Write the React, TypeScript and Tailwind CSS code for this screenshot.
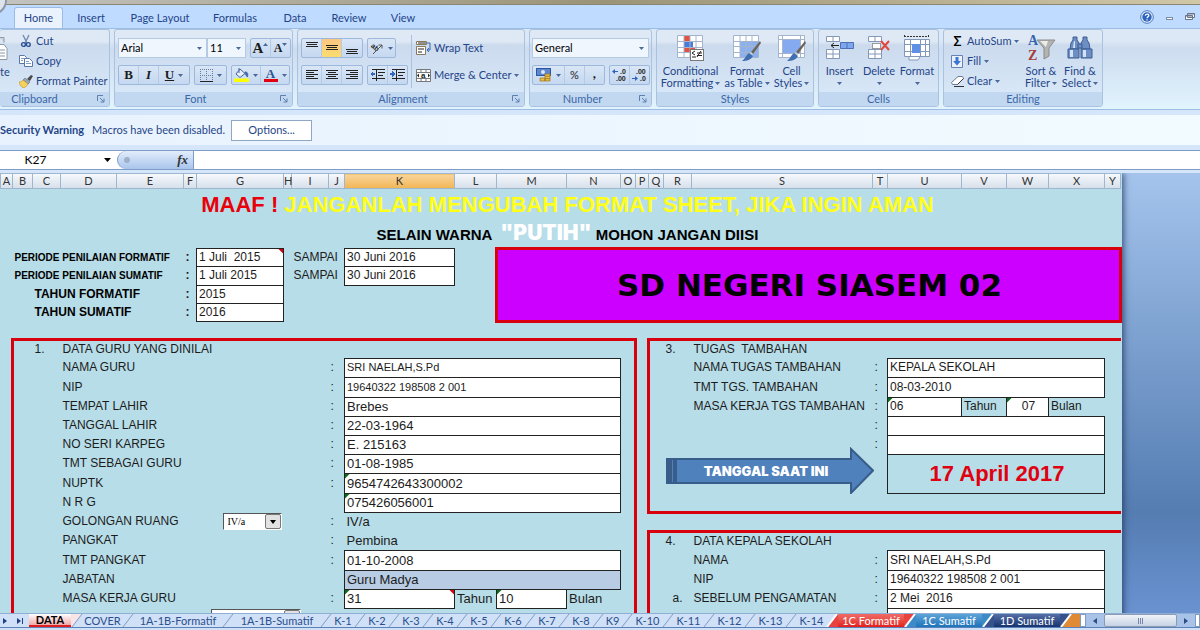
import React, { useState } from "react";
import clsx from "clsx";

const Caret: React.FC<{ className?: string }> = ({ className }) => (
  <svg viewBox="0 0 5 3" className={clsx("h-[3px] w-[5px] shrink-0", className)}>
    <path d="M0 0h5L2.5 3z" fill="#4a6899" />
  </svg>
);

/* ---------- Ribbon building blocks ---------- */

interface GroupProps {
  title: string;
  className: string;
  titleClassName?: string;
  launcher?: boolean;
  children: React.ReactNode;
}

const Group: React.FC<GroupProps> = ({ title, className, titleClassName, launcher, children }) => (
  <section
    className={clsx(
      "flex shrink-0 flex-col overflow-hidden rounded-[3px] border border-[#a9c2e0] bg-linear-to-b from-[#dfe9f5] from-15% via-[#cbdaed] via-20% to-[#dcebfa]",
      className
    )}
  >
    <div className="flex flex-1">{children}</div>
    <div
      className={clsx(
        "relative flex h-[14px] shrink-0 items-center justify-center bg-[#c1d8f0] text-[#3c67a8]",
        titleClassName
      )}
    >
      <h2>{title}</h2>
      {launcher && (
        <button type="button" aria-label={`${title} settings`} className="absolute right-1">
          <svg viewBox="0 0 8 8" className="size-[8px]" fill="none" stroke="#5c7fae">
            <path d="M.5 6V.5H6M3 3l4 4M7 3.5V7H3.5" />
          </svg>
        </button>
      )}
    </div>
  </section>
);

const ButtonSet: React.FC<{ children: React.ReactNode }> = ({ children }) => (
  <div className="flex h-5 divide-x divide-[#b5cae5] rounded-[2px] border border-[#9cb8dc] bg-linear-to-b from-[#d9e6f6] to-[#c5d8f0]">
    {children}
  </div>
);

interface ToolProps {
  label: string;
  className: string;
  caret?: boolean;
  children: React.ReactNode;
}

const Tool: React.FC<ToolProps> = ({ label, className, caret, children }) => (
  <button
    type="button"
    aria-label={label}
    className={clsx("flex items-center justify-center gap-1 text-[#1c1c1c]", className)}
  >
    {children}
    {caret && <Caret />}
  </button>
);

const DropDown: React.FC<{ label: string; value: string; className: string }> = ({
  label,
  value,
  className,
}) => (
  <div className={clsx("relative flex h-5 items-center border border-[#b5cae5] bg-[#f0f6fd]", className)}>
    <select
      aria-label={label}
      className="h-full w-full appearance-none bg-transparent pl-[2px] text-black outline-none"
    >
      <option>{value}</option>
    </select>
    <Caret className="pointer-events-none absolute right-1" />
  </div>
);

interface SmallButtonProps {
  text: string;
  caret?: boolean;
  icon: React.ReactNode;
}

const SmallButton: React.FC<SmallButtonProps> = ({ text, caret, icon }) => (
  <button type="button" className="flex h-5 items-center gap-[3px] whitespace-nowrap">
    {icon}
    <span>{text}</span>
    {caret && <Caret />}
  </button>
);

interface BigButtonProps {
  lines: string[];
  className: string;
  icon: React.ReactNode;
}

const BigButton: React.FC<BigButtonProps> = ({ lines, className, icon }) => (
  <button type="button" className={clsx("flex flex-col items-center pt-[5px] leading-3", className)}>
    {icon}
    <span className="mt-1 whitespace-nowrap">{lines[0]}</span>
    <span className="flex h-3 items-center gap-[2px] whitespace-nowrap">
      {lines[1]}
      <Caret />
    </span>
  </button>
);

/* ---------- Icons ---------- */

const Lines: React.FC<{ rows: number[][] }> = ({ rows }) => (
  <svg viewBox="0 0 14 12" className="h-3 w-[14px]" stroke="#222" shapeRendering="crispEdges">
    {rows.map(([x, y, w]) => (
      <path key={y} d={`M${x} ${y + 0.5}h${w}`} />
    ))}
  </svg>
);

const CutIcon = () => (
  <svg viewBox="0 0 14 14" className="size-[14px]" fill="none">
    <path d="M4 1l4 8M10 1L6 9" stroke="#6d86ad" strokeWidth="1.3" />
    <circle cx="4.5" cy="10.5" r="1.9" stroke="#2a4f92" strokeWidth="1.4" />
    <circle cx="9.3" cy="10.5" r="1.9" stroke="#2a4f92" strokeWidth="1.4" />
  </svg>
);

const CopyIcon = () => (
  <svg viewBox="0 0 14 12" className="h-3 w-[14px]" fill="#fff" stroke="#5878a8">
    <path d="M.5.5h5l2 2v6h-7z" />
    <path d="M5.5 3.5h5l3 3v5h-8z" />
    <path d="M2 3.5h3M2 5.5h2M7 6.5h3M7 8.5h5" stroke="#7a9cd0" />
  </svg>
);

const PainterIcon = () => (
  <svg viewBox="0 0 14 13" className="h-[13px] w-[14px]">
    <path d="M8 4l4-4 2 1-3 5z" fill="#4b4b4b" />
    <path d="M6 3l5 4-2 2-5-4z" fill="#9aa7bb" stroke="#5b6678" strokeWidth=".6" />
    <path d="M4 5l5 4c-1 2-3 4-5 4C2 11 0 9 0 7c2 0 3-1 4-2z" fill="#f4d35a" stroke="#b98f25" strokeWidth=".6" />
  </svg>
);

const GridIcon = () => (
  <svg viewBox="0 0 13 13" className="size-[13px]" stroke="#6a7f9f" shapeRendering="crispEdges">
    <path d="M0 .5h13M0 6.5h13M.5 0v12M6.5 0v12M12.5 0v12" strokeDasharray="1 1" />
    <path d="M0 12.5h13" stroke="#222" />
  </svg>
);

const BucketIcon = () => (
  <svg viewBox="0 0 15 14" className="h-[14px] w-[15px]">
    <path d="M6 1l5 4.500-5 4L2 6z" fill="#e8eef7" stroke="#44669c" />
    <path d="M5 0v5M11 4c3 0 3 2 2.500 5-1-1-2.500-3-2.500-5z" fill="#3f6fb8" stroke="#44669c" />
    <path d="M0 10.500h15V14H0z" fill="#ffff00" />
  </svg>
);

const FontColorIcon = () => (
  <span className="flex flex-col items-center">
    <span className="font-['Liberation_Serif',serif] text-[13px] leading-[11px] font-bold text-[#2d5494]">A</span>
    <span className="h-[3px] w-[14px] bg-[#e00010]" />
  </span>
);

const OrientationIcon = () => (
  <svg viewBox="0 0 14 14" className="size-[14px] overflow-visible">
    <text x="1" y="8" fontSize="7" fontWeight="bold" fill="#222" transform="rotate(40 4 6)" fontFamily="Liberation Sans">
      ab
    </text>
    <path d="M3 13L12 4M12 4v3.500M12 4H8.500" stroke="#555" fill="none" />
  </svg>
);

const IndentIcon: React.FC<{ increase?: boolean }> = ({ increase }) => (
  <svg viewBox="0 0 15 12" className="h-3 w-[15px]" shapeRendering="crispEdges">
    <path d="M2 .5h13M8 3.500h7M8 6.500h5M2 9.500h13M6.500 0v12" stroke="#222" />
    <path d={increase ? "M5 5L2 2v2H0v2h2v2z" : "M0 5l3-3v2h2v2H3v2z"} fill="#2f66c0" />
  </svg>
);

const WrapIcon = () => (
  <svg viewBox="0 0 15 14" className="h-[14px] w-[15px]" fill="none">
    <path d="M.5.5h10v3H.5zM.5 5.500h9v8h-9z" fill="#fff" stroke="#8a7a5c" />
    <path d="M2 2h8M2 8h6M2 11h4" stroke="#222" />
    <path d="M11 2h3v7h-3M13 7l-2 2 2 2" stroke="#2f66c0" />
  </svg>
);

const MergeIcon = () => (
  <svg viewBox="0 0 15 13" className="h-[13px] w-[15px]">
    <path d="M.5.5h14v12H.5zM.5 3.500h14M.5 9.500h14M5 .5v3M10 .5v3M5 9.500v3M10 9.500v3" fill="#fff" stroke="#77787c" />
    <path d="M1 6.500l2-2v4zM14 6.500l-2-2v4z" fill="#222" />
    <text x="5" y="9" fontSize="8" fontWeight="bold" fill="#222" fontFamily="Liberation Sans">
      a
    </text>
  </svg>
);

const MoneyIcon = () => (
  <svg viewBox="0 0 16 14" className="h-[14px] w-4">
    <rect x=".5" y=".5" width="14" height="7" fill="#5c86cf" stroke="#2d56a0" />
    <circle cx="7" cy="4" r="2" fill="#dbe7fa" />
    <path d="M9 6h5v7H9zM4 10h5v3H4z" fill="#e8bd4a" stroke="#9c7418" strokeWidth=".7" />
    <path d="M9 8.300h5M9 10.600h5" stroke="#9c7418" strokeWidth=".7" />
  </svg>
);

const DecimalIcon: React.FC<{ decrease?: boolean }> = ({ decrease }) => (
  <svg
    viewBox="0 0 15 14"
    className="h-[14px] w-[15px] overflow-visible"
    fontFamily="Liberation Sans"
    fontSize="7"
    fontWeight="bold"
    fill="#222"
  >
    <text x={decrease ? 4 : 8} y="6">{decrease ? ".00" : ".0"}</text>
    <text x={decrease ? 8 : 4} y="13">{decrease ? ".0" : ".00"}</text>
    <path
      d={decrease ? "M6 10.500L3 8v2H0v1h3v2z" : "M0 3.500L3 1v2h3v1H3v2z"}
      fill="#2f66c0"
    />
  </svg>
);

const Brush = () => (
  <g>
    <path d="M27 6l-9 11 2 2 8-11z" fill="#6c6459" />
    <path d="M18 17l2 2-1 2-3-2z" fill="#c9ced6" />
    <path d="M16 18l4 3c-2 4-6 5-11 5 3-2 4-6 7-8z" fill="#3f6fb0" />
  </g>
);

const ConditionalIcon = () => (
  <svg viewBox="0 0 28 26" className="h-[26px] w-7" fill="none">
    <path d="M.5.500h25v22H.5z" fill="#fff" />
    <path d="M7 1h6v5H7zM7 12h11v5H7z" fill="#e2523f" />
    <path d="M7 6h9v6H7z" fill="#4a7bd6" />
    <path d="M.5.500h25v22H.5zM0 6.500h26M0 12.500h26M0 17.500h26M7 0v23M13 0v23M19 0v23" stroke="#a4b4cd" />
    <rect x="13.500" y="14.500" width="13" height="11" fill="#fff" stroke="#777" />
    <path d="M18 16l-3 2 3 2M15 22h4M24 16l-4 6M20 18h5M20 20.500h5" stroke="#222" />
  </svg>
);

const TableStyleIcon = () => (
  <svg viewBox="0 0 28 26" className="h-[26px] w-7" fill="none">
    <path d="M.5.500h25v22H.5z" fill="#fff" />
    <path d="M7 6h18v16H7z" fill="#8bb0ee" />
    <path d="M.5.500h25v22H.5zM0 6.500h26M0 11.500h26M0 17.500h26M7 0v23M13 0v23M19 0v23" stroke="#a4b4cd" />
    <Brush />
  </svg>
);

const CellStyleIcon = () => (
  <svg viewBox="0 0 28 26" className="h-[26px] w-7" fill="none">
    <path d="M.5.500h26v22H.5z" fill="#fff" stroke="#a4b4cd" />
    <path d="M0 4.500h27M0 18.500h27M4.500 0v23M22.500 0v23" stroke="#a4b4cd" />
    <path d="M5 5h17v13H5z" fill="#86aaf0" />
    <Brush />
  </svg>
);

const InsertIcon = () => (
  <svg viewBox="0 0 28 26" className="h-[26px] w-7" fill="#fff" stroke="#8298ba">
    <path d="M.5 1.500h13v5H.5zM7 1.500v5M.5 14.500h13v9H.5zM.5 19h13M7 14v9.500" />
    <path d="M14.500 7.500h13v6h-13zM21 7.500v6" fill="#7ea6ee" stroke="#4d72b4" />
    <path d="M5 10.500h8M8 8l-3 2.500L8 13" fill="none" stroke="#222" />
  </svg>
);

const DeleteIcon = () => (
  <svg viewBox="0 0 28 26" className="h-[26px] w-7" fill="#fff" stroke="#8298ba">
    <path d="M3.500 1.500h13v5h-13zM10 1.500v5M3.500 14.500h13v9h-13zM3.500 19h13M10 14v9.500" />
    <path d="M7.500 8.500h8v5h-8z" strokeDasharray="1 1" stroke="#444" />
    <path d="M16 6l8 9M24 6l-8 9" stroke="#e2473c" strokeWidth="2" />
  </svg>
);

const FormatIcon = () => (
  <svg viewBox="0 0 28 26" className="h-[26px] w-7" fill="#fff" stroke="#8298ba">
    <path d="M1.500 4.500h25v17h-25zM1 9.500h26M1 16.500h26M7.500 4v18M17.500 4v18M22.500 4v18" />
    <path d="M9 9h8v9H9z" fill="#5f90e6" stroke="none" />
    <path d="M1 1.500h24M1.500 0v3M25.500 0v3" stroke="#333" strokeDasharray="2 1" />
    <path d="M6 22v3h9l2-3" />
  </svg>
);

const FunnelIcon = () => (
  <svg
    viewBox="0 0 28 26"
    className="h-[26px] w-7 overflow-visible"
    fontFamily="Liberation Serif"
    fontWeight="bold"
    fontSize="14"
  >
    <path d="M10 5h18l-6 8v8l-5 3V13z" fill="#b3b3b1" stroke="#8b8b89" />
    <path d="M13 6h8l-2 6z" fill="#ececea" />
    <text x="1" y="10" fill="#3465ad">A</text>
    <text x="1" y="25" fill="#a53b37">Z</text>
  </svg>
);

const BinocularsIcon = () => (
  <svg viewBox="0 0 28 26" className="h-[26px] w-7" fill="#6d8fc4" stroke="#3d5c91">
    <path d="M7 2h4v3l2 3v6H4l1-6 2-3zM17 2h4v3l2 3 1 6h-9V8l2-3z" />
    <path d="M2 14h11v9H2zM15 14h11v9H15z" />
    <path d="M4 15h3v7H4zM17 15h3v7h-3zM8 6h1v7H7z" fill="#d4e2f7" stroke="none" />
    <path d="M12 9h4v4h-4z" />
  </svg>
);

const FillIcon = () => (
  <svg viewBox="0 0 13 13" className="size-[13px]">
    <path d="M.5.500h11v12H.5z" fill="#eaf1fb" stroke="#6583b3" />
    <path d="M4.500 2h3v4H10l-4 4.500L2 6h2.500z" fill="#3a74d4" />
  </svg>
);

const EraserIcon = () => (
  <svg viewBox="0 0 13 11" className="h-[11px] w-[13px]">
    <path d="M7 .5h4.500l1 2-6 6h-5l-1-2z" fill="#fff" stroke="#6b7b93" />
    <path d="M6.500 8.500l6-6M3 10.500h10" stroke="#333" />
  </svg>
);

/* ---------- Ribbon ---------- */

const menu = [
  { name: "Home", className: "ml-[14px] w-[49px]" },
  { name: "Insert", className: "w-[56px]" },
  { name: "Page Layout", className: "w-[82px]" },
  { name: "Formulas", className: "w-[68px]" },
  { name: "Data", className: "w-[52px]" },
  { name: "Review", className: "w-[56px]" },
  { name: "View", className: "w-[52px]" },
];

const MenuBar: React.FC = () => (
  <nav className="flex h-[23px] shrink-0 items-end bg-[#bfdbff]">
    {menu.map((item) => (
      <button
        key={item.name}
        type="button"
        className={clsx(
          "h-[21px]",
          item.className,
          item.name === "Home" && "rounded-t-[3px] border border-b-0 border-[#9dbce4] bg-[#eaf3fd]"
        )}
      >
        {item.name}
      </button>
    ))}
    <div className="ml-auto flex h-full items-center gap-3 pr-[5px]">
      <button type="button" aria-label="Help">
        <svg viewBox="0 0 14 14" className="size-[14px]">
          <circle cx="7" cy="7" r="6.300" fill="#e6effb" stroke="#4c79bd" />
          <circle cx="7" cy="7" r="4.700" fill="#2a62bd" />
          <path d="M5.300 5.800c0-2.300 3.500-2.300 3.500-.3C8.800 7 7 6.800 7 8.300M7 9.300v1.300" stroke="#fff" strokeWidth="1.300" fill="none" />
        </svg>
      </button>
      <button type="button" aria-label="Minimize" className="mt-1 h-[3px] w-[7px] border border-[#7c8ca5] bg-white" />
      <button type="button" aria-label="Restore">
        <svg viewBox="0 0 10 8" className="h-2 w-[10px]" fill="#fff" stroke="#66758c">
          <path d="M2.500.500h7v4h-7zM.5 2.500h7v4h-7z" />
          <path d="M.5 3h7M2.500 1h7" />
        </svg>
      </button>
    </div>
  </nav>
);

const Ribbon: React.FC = () => (
  <div className="flex h-[82px] shrink-0 gap-1 border-y border-[#9dbce4] bg-linear-to-b from-[#dce8f6] from-15% via-[#cddcef] via-25% to-[#e2f4fe] pb-[2px] whitespace-nowrap">
    <Group title="Clipboard" className="w-[110px] border-l-0" titleClassName="pr-10" launcher>
      <button type="button" aria-label="Paste" className="flex w-[19px] shrink-0 flex-col items-start pt-[6px]">
        <svg viewBox="0 0 8 26" className="h-[26px] w-2" fill="#fff" stroke="#8d99ab">
          <path d="M-1 1.500h5v5" fill="#ccd5e2" />
          <path d="M-1 8.500h5l3 4v11h-8zM0 14h5M0 17h5M0 20h5" />
        </svg>
        <span className="mt-1 leading-3">te</span>
      </button>
      <div className="flex flex-col pt-px">
        <SmallButton text="Cut" icon={<CutIcon />} />
        <SmallButton text="Copy" icon={<CopyIcon />} />
        <SmallButton text="Format Painter" icon={<PainterIcon />} />
      </div>
    </Group>

    <Group title="Font" className="w-[179px]" titleClassName="pr-4" launcher>
      <div className="flex flex-col gap-[7px] px-[3px] pt-2">
        <div className="flex">
          <DropDown label="Font" value="Arial" className="w-[89px]" />
          <DropDown label="Font size" value="11" className="mr-1 w-[39px]" />
          <ButtonSet>
            <Tool label="Increase font size" className="w-5">
              <span className="font-['Liberation_Serif',serif] text-[15px] font-bold">A</span>
              <Caret className="mb-2 -ml-1 rotate-180" />
            </Tool>
            <Tool label="Decrease font size" className="w-[19px]">
              <span className="font-['Liberation_Serif',serif] text-[12px] font-bold">A</span>
              <Caret className="mb-2 -ml-1" />
            </Tool>
          </ButtonSet>
        </div>
        <div className="flex gap-1 font-['Liberation_Serif',serif] text-[13px] font-bold">
          <ButtonSet>
            <Tool label="Bold" className="w-5">B</Tool>
            <Tool label="Italic" className="w-5 italic">I</Tool>
            <Tool label="Underline" className="w-[30px]" caret>
              <span className="underline">U</span>
            </Tool>
          </ButtonSet>
          <ButtonSet>
            <Tool label="Borders" className="w-[31px]" caret><GridIcon /></Tool>
          </ButtonSet>
          <ButtonSet>
            <Tool label="Fill color" className="w-[29px]" caret><BucketIcon /></Tool>
            <Tool label="Font color" className="w-[28px]" caret><FontColorIcon /></Tool>
          </ButtonSet>
        </div>
      </div>
    </Group>

    <Group title="Alignment" className="w-[228px]" titleClassName="pr-4" launcher>
      <div className="flex flex-col gap-[7px] pt-2 pl-[3px]">
        <div className="flex gap-1">
          <ButtonSet>
            <Tool label="Top align" className="w-5"><Lines rows={[[1, 0, 12], [2, 2, 10], [1, 4, 12]]} /></Tool>
            <Tool label="Middle align" className="w-5 bg-linear-to-b from-[#fbc683] to-[#fddc6e]">
              <Lines rows={[[1, 3, 12], [2, 5, 10], [1, 7, 12]]} />
            </Tool>
            <Tool label="Bottom align" className="w-5"><Lines rows={[[1, 7, 12], [2, 9, 10], [1, 11, 12]]} /></Tool>
          </ButtonSet>
          <ButtonSet>
            <Tool label="Orientation" className="w-[27px]" caret><OrientationIcon /></Tool>
          </ButtonSet>
        </div>
        <div className="flex gap-1">
          <ButtonSet>
            <Tool label="Align left" className="w-5"><Lines rows={[[1, 1, 12], [1, 3, 8], [1, 5, 12], [1, 7, 8], [1, 9, 12]]} /></Tool>
            <Tool label="Center" className="w-5"><Lines rows={[[1, 1, 12], [3, 3, 8], [1, 5, 12], [3, 7, 8], [1, 9, 12]]} /></Tool>
            <Tool label="Align right" className="w-5"><Lines rows={[[1, 1, 12], [5, 3, 8], [1, 5, 12], [5, 7, 8], [1, 9, 12]]} /></Tool>
          </ButtonSet>
          <ButtonSet>
            <Tool label="Decrease indent" className="w-5"><IndentIcon /></Tool>
            <Tool label="Increase indent" className="w-[19px]"><IndentIcon increase /></Tool>
          </ButtonSet>
        </div>
      </div>
      <div className="mt-[5px] mb-1 ml-[3px] flex flex-col gap-[7px] border-l border-[#a9c2e0] pt-[3px] pl-[4px]">
        <SmallButton text="Wrap Text" icon={<WrapIcon />} />
        <SmallButton text="Merge & Center" icon={<MergeIcon />} caret />
      </div>
    </Group>

    <Group title="Number" className="w-[123px]" titleClassName="pr-4" launcher>
      <div className="flex flex-col gap-[7px] px-[2px] pt-2">
        <DropDown label="Number format" value="General" className="w-[117px]" />
        <div className="flex gap-1">
          <ButtonSet>
            <Tool label="Currency" className="w-8" caret><MoneyIcon /></Tool>
            <Tool label="Percent" className="w-5">%</Tool>
            <Tool label="Comma" className="w-[19px] pb-1 text-[14px] leading-4 font-bold">,</Tool>
          </ButtonSet>
          <ButtonSet>
            <Tool label="Increase decimal" className="w-5"><DecimalIcon /></Tool>
            <Tool label="Decrease decimal" className="w-[19px]"><DecimalIcon decrease /></Tool>
          </ButtonSet>
        </div>
      </div>
    </Group>

    <Group title="Styles" className="w-[158px]">
      <BigButton lines={["Conditional", "Formatting"]} className="w-[67px]" icon={<ConditionalIcon />} />
      <BigButton lines={["Format", "as Table"]} className="w-[46px]" icon={<TableStyleIcon />} />
      <BigButton lines={["Cell", "Styles"]} className="w-[43px]" icon={<CellStyleIcon />} />
    </Group>

    <Group title="Cells" className="w-[121px]">
      <BigButton lines={["Insert", ""]} className="w-[41px]" icon={<InsertIcon />} />
      <BigButton lines={["Delete", ""]} className="w-[38px]" icon={<DeleteIcon />} />
      <BigButton lines={["Format", ""]} className="w-[38px]" icon={<FormatIcon />} />
    </Group>

    <Group title="Editing" className="w-[160px]">
      <div className="flex w-[77px] flex-col pt-px pl-[7px]">
        <SmallButton
          text="AutoSum"
          icon={<span className="w-[13px] text-center text-[13px] font-bold text-black">Σ</span>}
          caret
        />
        <SmallButton text="Fill" icon={<FillIcon />} caret />
        <SmallButton text="Clear" icon={<EraserIcon />} caret />
      </div>
      <BigButton lines={["Sort &", "Filter"]} className="w-[40px]" icon={<FunnelIcon />} />
      <BigButton lines={["Find &", "Select"]} className="w-[38px]" icon={<BinocularsIcon />} />
    </Group>
  </div>
);

/* ---------- Sheet ---------- */

const columns = [
  { name: "A", width: "w-[12px]" },
  { name: "B", width: "w-[20px]" },
  { name: "C", width: "w-[28px]" },
  { name: "D", width: "w-[56px]" },
  { name: "E", width: "w-[67px]" },
  { name: "F", width: "w-[13px]" },
  { name: "G", width: "w-[87px]" },
  { name: "H", width: "w-[8px]" },
  { name: "I", width: "w-[37px]" },
  { name: "J", width: "w-[16px]" },
  { name: "K", width: "w-[110px]" },
  { name: "L", width: "w-[42px]" },
  { name: "M", width: "w-[70px]" },
  { name: "N", width: "w-[54px]" },
  { name: "O", width: "w-[15px]" },
  { name: "P", width: "w-[13px]" },
  { name: "Q", width: "w-[15px]" },
  { name: "R", width: "w-[28px]" },
  { name: "S", width: "w-[181px]" },
  { name: "T", width: "w-[15px]" },
  { name: "U", width: "w-[74px]" },
  { name: "V", width: "w-[45px]" },
  { name: "W", width: "w-[42px]" },
  { name: "X", width: "w-[56px]" },
  { name: "Y", width: "w-[16px]" },
];

const box = "border border-[#222] bg-white";
const edgeTop = "border-t-3 border-t-[#d8000c]";
const edgeLeft = "border-l-3 border-l-[#d8000c]";
const edgeRight = "border-r-3 border-r-[#d8000c]";
const edgeBottom = "border-b-3 border-b-[#d8000c]";

interface CellProps {
  span?: number;
  rows?: number;
  className?: string;
  mark?: "green" | "red";
  children?: React.ReactNode;
}

const Cell: React.FC<CellProps> = ({ span, rows, className, mark, children }) => (
  <td
    colSpan={span}
    rowSpan={rows}
    className={clsx("relative p-0 pl-[2px] whitespace-pre", className)}
  >
    {mark === "green" && (
      <span className="absolute top-0 left-0 size-[5px] bg-[#0b6b1d] [clip-path:polygon(0_0,100%_0,0_100%)]" />
    )}
    {mark === "red" && (
      <span className="absolute top-0 right-0 size-[5px] bg-[#d8000c] [clip-path:polygon(0_0,100%_0,100%_100%)]" />
    )}
    {children}
  </td>
);

const SheetSelect: React.FC<{ label: string; value: string; className: string }> = ({
  label,
  value,
  className,
}) => (
  <div className={clsx("relative border border-[#555] border-r-white border-b-white bg-white", className)}>
    <select
      aria-label={label}
      className="block h-full w-full appearance-none bg-transparent pl-1 font-['Liberation_Serif',serif] text-[10px] text-black outline-none"
    >
      <option>{value}</option>
    </select>
    <span className="pointer-events-none absolute top-0 right-0 flex h-full w-4 items-center justify-center rounded-[2px] border border-[#777] bg-[#e2e2e2]">
      <svg viewBox="0 0 6 4" className="h-1 w-[6px]">
        <path d="M0 0h6L3 4z" fill="#000" />
      </svg>
    </span>
  </div>
);

interface Field {
  label: string;
  value: string;
  className?: string;
  mark?: "green" | "red";
  colon?: boolean;
}

// Columns A - P of one row in the teacher panel
const TeacherField: React.FC<Field> = ({ label, value, className = box, mark, colon = true }) => (
  <>
    <Cell />
    <Cell className={edgeLeft} />
    <Cell />
    <Cell span={6}>{label}</Cell>
    <Cell>{colon && ":"}</Cell>
    <Cell span={4} className={clsx("text-[13px]", className)} mark={mark}>{value}</Cell>
    <Cell className={edgeRight} />
    <Cell />
  </>
);

// Columns Q - Y of one row in the right-hand panels
const SideField: React.FC<Field & { num?: string }> = ({ num, label, value }) => (
  <>
    <Cell className={edgeLeft} />
    <Cell className="pl-[9px]">{num}</Cell>
    <Cell>{label}</Cell>
    <Cell>:</Cell>
    <Cell span={4} className={box}>{value}</Cell>
    <Cell />
  </>
);

const row = "h-[19px]";
const tallRow = "h-[20px]";

const Sheet: React.FC = () => (
  <div className="relative bg-[#b7dde8] shadow-[2px_0_6px_rgba(30,50,90,0.7)]">
    <table className="w-px table-fixed border-collapse font-['Liberation_Sans',sans-serif] text-[12px] leading-[15px] text-[#1c1c1c]">
      <colgroup>
        {columns.map((col) => (
          <col key={col.name} className={col.width} />
        ))}
      </colgroup>
      <thead>
        <tr className="h-[15px] bg-linear-to-b from-[#f6f9fc] to-[#d5deea] font-['Lato',sans-serif] text-[11px] leading-[14px] text-[#333]">
          {columns.map((col) => (
            <th
              key={col.name}
              scope="col"
              className={clsx(
                "border border-[#9eb6ce] p-0 text-center font-normal",
                col.name === "K" && "bg-linear-to-b from-[#f8d49b] to-[#f2b650]"
              )}
            >
              {col.name}
            </th>
          ))}
        </tr>
      </thead>
      <tbody>
        <tr className="h-8 text-[22px] leading-7 font-bold">
          <Cell />
          <Cell span={24} className="text-center text-[#ffff19]">
            <span className="text-[#e8000b]">MAAF !</span> JANGANLAH MENGUBAH FORMAT SHEET, JIKA INGIN AMAN
          </Cell>
        </tr>
        <tr className="h-[27px] text-[15px] leading-6 font-bold text-black">
          <Cell />
          <Cell span={24} className="text-center">
            {"SELAIN WARNA  "}
            <span className="font-['Inter',sans-serif] text-[21px] font-black text-white">"PUTIH"</span>
            {" MOHON JANGAN DIISI"}
          </Cell>
        </tr>
        <tr className="h-[18px]">
          <Cell />
          <Cell span={4} className="text-[10px] font-bold text-black">PERIODE PENILAIAN FORMATIF</Cell>
          <Cell className="font-bold">:</Cell>
          <Cell className={box} mark="red">{"1 Juli  2015"}</Cell>
          <Cell />
          <Cell span={2}>SAMPAI</Cell>
          <Cell className={box}>30 Juni 2016</Cell>
          <Cell />
          <Cell
            span={13}
            rows={4}
            className="border-3 border-[#d8000c] bg-[#cc00ff] text-center font-['DejaVu_Sans',sans-serif] text-[31px] leading-9 font-bold text-black"
          >
            SD NEGERI SIASEM 02
          </Cell>
        </tr>
        <tr className="h-[19px]">
          <Cell />
          <Cell span={4} className="text-[10px] font-bold text-black">PERIODE PENILAIAN SUMATIF</Cell>
          <Cell className="font-bold">:</Cell>
          <Cell className={box}>1 Juli 2015</Cell>
          <Cell />
          <Cell span={2}>SAMPAI</Cell>
          <Cell className={box}>30 Juni 2016</Cell>
          <Cell />
        </tr>
        <tr className="h-[18px]">
          <Cell span={2} />
          <Cell span={3} className="font-bold text-black">TAHUN FORMATIF</Cell>
          <Cell className="font-bold">:</Cell>
          <Cell className={box}>2015</Cell>
          <Cell span={5} />
        </tr>
        <tr className="h-[18px]">
          <Cell span={2} />
          <Cell span={3} className="font-bold text-black">TAHUN SUMATIF</Cell>
          <Cell className="font-bold">:</Cell>
          <Cell className={box}>2016</Cell>
          <Cell span={5} />
        </tr>
        <tr className="h-[18px]">
          <Cell span={25} />
        </tr>
        <tr className={row}>
          <Cell />
          <Cell className={clsx(edgeTop, edgeLeft)} />
          <Cell className={edgeTop}>1.</Cell>
          <Cell span={12} className={clsx(edgeTop, edgeRight)}>DATA GURU YANG DINILAI</Cell>
          <Cell />
          <Cell className={clsx(edgeTop, edgeLeft)} />
          <Cell className={edgeTop}>3.</Cell>
          <Cell span={7} className={edgeTop}>{"TUGAS  TAMBAHAN"}</Cell>
        </tr>
        <tr className={row}>
          <TeacherField label="NAMA GURU" value="SRI NAELAH,S.Pd" className={clsx(box, "!text-[11px]")} />
          <SideField label="NAMA TUGAS TAMBAHAN" value="KEPALA SEKOLAH" />
        </tr>
        <tr className={tallRow}>
          <TeacherField label="NIP" value="19640322 198508 2 001" className={clsx(box, "!text-[11px]")} />
          <SideField label="TMT TGS. TAMBAHAN" value="08-03-2010" />
        </tr>
        <tr className={row}>
          <TeacherField label="TEMPAT LAHIR" value="Brebes" />
          <Cell className={edgeLeft} />
          <Cell />
          <Cell>MASA KERJA TGS TAMBAHAN</Cell>
          <Cell>:</Cell>
          <Cell className={box} mark="green">06</Cell>
          <Cell>Tahun</Cell>
          <Cell className={clsx(box, "text-center")} mark="green">07</Cell>
          <Cell>Bulan</Cell>
          <Cell />
        </tr>
        <tr className={row}>
          <TeacherField label="TANGGAL LAHIR" value="22-03-1964" />
          <SideField label="" value="" />
        </tr>
        <tr className={row}>
          <TeacherField label="NO SERI KARPEG" value="E. 215163" />
          <SideField label="" value="" />
        </tr>
        <tr className={row}>
          <TeacherField label="TMT SEBAGAI GURU" value="01-08-1985" />
          <Cell className={edgeLeft} />
          <Cell span={3} />
          <Cell
            span={4}
            rows={2}
            className="border border-[#222] text-center text-[22px] leading-7 font-bold text-[#e00010]"
          >
            17 April 2017
          </Cell>
          <Cell />
        </tr>
        <tr className={tallRow}>
          <TeacherField label="NUPTK" value="9654742643300002" mark="green" />
          <Cell className={edgeLeft} />
          <Cell span={3} />
          <Cell />
        </tr>
        <tr className={row}>
          <TeacherField label="N R G" value="075426056001" mark="green" colon={false} />
          <Cell className={clsx(edgeLeft, edgeBottom)} />
          <Cell span={8} className={edgeBottom} />
        </tr>
        <tr className={row}>
          <Cell />
          <Cell className={edgeLeft} />
          <Cell />
          <Cell span={3}>GOLONGAN RUANG</Cell>
          <Cell>
            <SheetSelect label="Golongan ruang" value="IV/a" className="mr-[2px] ml-auto h-[17px] w-[59px]" />
          </Cell>
          <Cell span={2} />
          <Cell>:</Cell>
          <Cell span={4} className="text-[13px]">IV/a</Cell>
          <Cell className={edgeRight} />
          <Cell />
          <Cell span={9} />
        </tr>
        <tr className={row}>
          <TeacherField label="PANGKAT" value="Pembina" className="" />
          <Cell className={clsx(edgeTop, edgeLeft)} />
          <Cell className={edgeTop}>4.</Cell>
          <Cell span={7} className={edgeTop}>DATA KEPALA SEKOLAH</Cell>
        </tr>
        <tr className={tallRow}>
          <TeacherField label="TMT PANGKAT" value="01-10-2008" />
          <SideField label="NAMA" value="SRI NAELAH,S.Pd" />
        </tr>
        <tr className={row}>
          <TeacherField label="JABATAN" value="Guru Madya" className="border border-[#222] bg-[#b8cce4]" colon={false} />
          <SideField label="NIP" value="19640322 198508 2 001" />
        </tr>
        <tr className={row}>
          <Cell />
          <Cell className={edgeLeft} />
          <Cell />
          <Cell span={6}>MASA KERJA GURU</Cell>
          <Cell>:</Cell>
          <Cell className={clsx(box, "text-[13px]")} mark="green">
            31
            <span className="absolute top-0 right-0 size-[5px] bg-[#d8000c] [clip-path:polygon(0_0,100%_0,100%_100%)]" />
          </Cell>
          <Cell className="text-[13px]">Tahun</Cell>
          <Cell className={clsx(box, "text-[13px]")} mark="green">10</Cell>
          <Cell className="text-[13px]">Bulan</Cell>
          <Cell className={edgeRight} />
          <Cell />
          <SideField num="a." label="SEBELUM PENGAMATAN" value={"2 Mei  2016"} />
        </tr>
        <tr className={row}>
          <Cell />
          <Cell className={edgeLeft} />
          <Cell span={4} />
          <Cell span={3}>
            <SheetSelect label="Masa kerja golongan" value="" className="ml-3 h-[17px] w-[90px]" />
          </Cell>
          <Cell span={5} />
          <Cell className={edgeRight} />
          <Cell />
          <Cell className={edgeLeft} />
          <Cell span={3} />
          <Cell span={4} className={box} />
          <Cell />
        </tr>
      </tbody>
    </table>

    {/* Block arrow floating over the cells */}
    <div className="absolute top-[274px] left-[666px] flex h-[47px] w-[208px] items-center justify-center">
      <svg viewBox="0 0 208 47" className="absolute inset-0 size-full" fill="#4f81bd" stroke="#385d8a" strokeWidth="2">
        <path d="M1 12h2v24H1zM5 12h3v24H5zM10 12h175V2l22 21.500L185 46V36H10z" />
      </svg>
      <span className="relative mr-2 font-['Inter',sans-serif] text-[13px] font-black whitespace-nowrap text-white">
        TANGGAL SAAT INI
      </span>
    </div>
  </div>
);

/* ---------- Sheet tabs ---------- */

const tabs = [
  { name: "DATA", width: "w-[42px]", fill: "#f6e4e6" },
  { name: "COVER", width: "w-[39px]" },
  { name: "1A-1B-Formatif", width: "w-[88px]" },
  { name: "1A-1B-Sumatif", width: "w-[86px]" },
  { name: "K-1", width: "w-[22px]" },
  { name: "K-2", width: "w-[22px]" },
  { name: "K-3", width: "w-[22px]" },
  { name: "K-4", width: "w-[22px]" },
  { name: "K-5", width: "w-[22px]" },
  { name: "K-6", width: "w-[22px]" },
  { name: "K-7", width: "w-[22px]" },
  { name: "K-8", width: "w-[22px]" },
  { name: "K9", width: "w-[17px]" },
  { name: "K-10", width: "w-[29px]" },
  { name: "K-11", width: "w-[29px]" },
  { name: "K-12", width: "w-[29px]" },
  { name: "K-13", width: "w-[29px]" },
  { name: "K-14", width: "w-[29px]" },
  { name: "1C Formatif", width: "w-[66px]", bg: "bg-linear-to-b from-[#ef6a66] to-[#e31b1b] text-white", fill: "#e94340" },
  { name: "1C Sumatif", width: "w-[66px]", bg: "bg-linear-to-b from-[#5da3d8] to-[#1b74b8] text-white", fill: "#3c8bc8" },
  { name: "1D Sumatif", width: "w-[66px]", bg: "bg-linear-to-b from-[#566fa6] to-[#15336f] text-white", fill: "#36518b" },
  { name: "", width: "w-2", bg: "bg-[#e08a35]", fill: "#e08a35" },
];

const plainTab = "#cfe0f7";

const SheetTabs: React.FC = () => {
  const [active, setActive] = useState("DATA");

  return (
    <div className="flex h-[15px] shrink-0 items-stretch border-y border-t-[#8faed6] border-b-[#5c82b8] bg-[#cfe0f7] text-[#2a4f8e]">
      <button type="button" aria-label="Next sheet" className="flex w-[10px] items-center justify-center">
        <svg viewBox="0 0 4 6" className="h-[6px] w-1"><path d="M0 0l4 3-4 3z" fill="#1f3f86" /></svg>
      </button>
      <button type="button" aria-label="Last sheet" className="flex w-[19px] items-center justify-center">
        <svg viewBox="0 0 6 6" className="size-[6px]"><path d="M0 0l4 3-4 3zM5 0h1v6H5z" fill="#1f3f86" /></svg>
      </button>
      {tabs.map((tab, index) => (
        <React.Fragment key={tab.name}>
          {index > 0 && (
            <svg viewBox="0 0 12 13" preserveAspectRatio="none" className="h-full w-3 shrink-0">
              <path d="M0 0h11L1 13H0z" fill={tabs[index - 1].fill ?? plainTab} />
              <path d="M12 0v13H1L11 0z" fill={tab.fill ?? plainTab} />
              <path d="M1 13L11 0" stroke={tab.bg ? "#fff" : "#7f9cc6"} strokeWidth={tab.bg ? 2 : 1} />
            </svg>
          )}
          <button
            type="button"
            aria-label={tab.name || "More sheets"}
            onClick={() => setActive(tab.name)}
            className={clsx(
              "flex shrink-0 items-center justify-center whitespace-nowrap",
              tab.width,
              tab.bg,
              tab.name === active &&
                "border-b-2 border-[#e02020] bg-linear-to-b from-white to-[#f0a8a8] font-bold text-black"
            )}
          >
            {tab.name}
          </button>
        </React.Fragment>
      ))}
      <div className="w-[6px] shrink-0 border border-[#7f9cc6] bg-white" />
      <div className="flex flex-1 bg-[#a9c3e8]">
        <button type="button" aria-label="Scroll left" className="flex w-[18px] items-center justify-center">
          <svg viewBox="0 0 4 6" className="h-[6px] w-1"><path d="M4 0L0 3l4 3z" fill="#2c4c84" /></svg>
        </button>
        <div className="flex flex-1 items-center justify-center gap-px rounded-[2px] border border-[#8a9bb5] bg-linear-to-b from-[#f1f4f9] to-[#c6d2e4]">
          <span className="h-[6px] w-px bg-[#7688a5]" />
          <span className="h-[6px] w-px bg-[#7688a5]" />
          <span className="h-[6px] w-px bg-[#7688a5]" />
        </div>
        <button type="button" aria-label="Scroll right" className="flex w-[18px] items-center justify-center">
          <svg viewBox="0 0 4 6" className="h-[6px] w-1"><path d="M0 0l4 3-4 3z" fill="#2c4c84" /></svg>
        </button>
      </div>
      <div className="w-[5px] shrink-0 border border-[#7f9cc6] bg-white" />
    </div>
  );
};

const App: React.FC = () => (
  <div className="flex h-screen flex-col overflow-hidden bg-[#d6e6fa] font-['Lato',sans-serif] text-[11px] leading-[14px] text-[#1f4588]">
    <div className="relative h-[5px] shrink-0 border-b border-[#8a8674] bg-linear-to-r from-[#c3c3c0] via-[#9c9477] to-[#cfc7a6]">
      <div className="absolute -top-[14px] -left-[22px] z-10 size-[29px] rounded-full border-2 border-[#8c98a8] bg-[#dde3ea]" />
    </div>
    <MenuBar />
    <Ribbon />

    {/* Macro warning */}
    <div className="mt-[5px] flex h-[30px] shrink-0 items-center bg-linear-to-r from-[#e8f2fe] to-[#f2fbff]">
      <strong className="mr-3 w-[80px] whitespace-nowrap">Security Warning</strong>
      <span>Macros have been disabled.</span>
      <button type="button" className="ml-[6px] h-[21px] w-[81px] border border-[#8fa6c4] bg-white">
        Options...
      </button>
    </div>

    {/* Formula bar */}
    <div className="mt-[5px] mb-[3px] flex h-[20px] shrink-0 items-stretch border-y border-[#7f9cc6] bg-white">
      <div className="relative flex w-[117px] items-center">
        <input
          aria-label="Name box"
          defaultValue="K27"
          className="w-full pr-[46px] text-center text-[12px] text-black outline-none"
        />
        <svg viewBox="0 0 7 4" className="absolute right-[6px] h-1 w-[7px]">
          <path d="M0 0h7L3.500 4z" fill="#000" />
        </svg>
      </div>
      <div className="flex w-[77px] items-center justify-between rounded-l-full border border-y-0 border-[#7f9cc6] bg-linear-to-b from-[#e2edfb] to-[#a9c5ec] pr-[5px] pl-[6px]">
        <span className="size-[6px] rounded-full bg-[#9fb0c9]" />
        <button
          type="button"
          aria-label="Insert function"
          className="font-['Liberation_Serif',serif] text-[13px] font-bold text-[#333] italic"
        >
          fx
        </button>
      </div>
      <input aria-label="Formula" className="min-w-0 flex-1 px-1 text-black outline-none" />
    </div>

    <main className="flex min-h-0 flex-1 items-start overflow-hidden bg-linear-to-b from-[#a4c4ec] via-[#557db2] via-77% to-[#6a92d0]">
      <Sheet />
    </main>
    <SheetTabs />
    <footer className="h-[2px] shrink-0 bg-[#cfe0f7]" />
  </div>
);

export default App;
